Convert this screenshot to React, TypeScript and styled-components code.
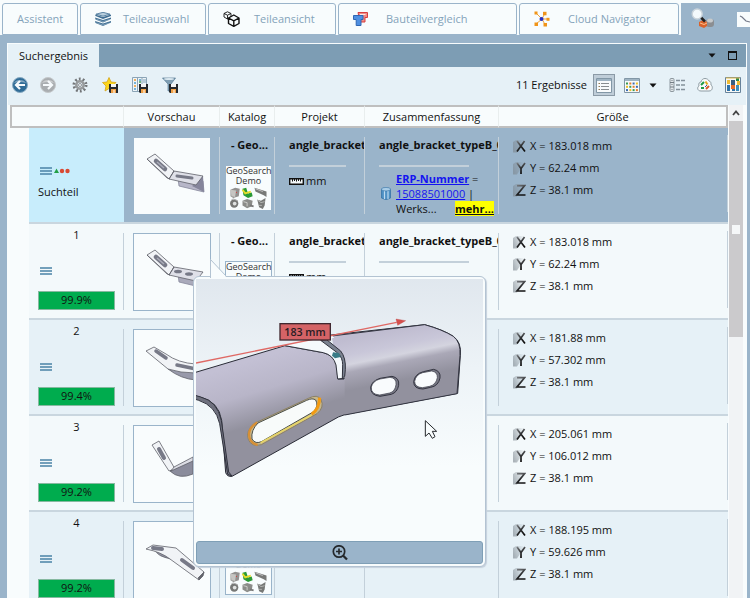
import React from "react";
import styled, { createGlobalStyle, css } from "styled-components";

const GlobalStyle = createGlobalStyle`
  * { box-sizing: border-box; }
  html, body { margin: 0; background: #9ab4ca; }
  body, button {
    font-family: "Open Sans", "Noto Sans", "Liberation Sans", sans-serif;
    font-size: 11px;
    line-height: 16px;
    color: #111;
  }
  button { margin: 0; padding: 0; border: 0; background: none; }
  svg { display: block; flex: none; }
`;

const Page = styled.div`
  height: 100vh;
  display: flex;
  flex-direction: column;
  overflow: hidden;
  background: #9ab4ca;
`;

const TabBar = styled.nav`
  flex: none;
  display: flex;
  gap: 2px;
  height: 35px;
  padding: 3px 0 0 2px;
  background: #f8fcfd;
  overflow: hidden;
`;

const Tab = styled.button<{ $width: number; $gap?: number }>`
  flex: none;
  display: flex;
  align-items: center;
  gap: ${(p) => p.$gap ?? 12}px;
  width: ${(p) => p.$width}px;
  padding-left: 14px;
  border: 1px solid #9ab4ca;
  border-radius: 3px 3px 0 0;
  background: #f8fcfd;
  color: #84a3ba;
`;

const ActiveTab = styled.button`
  flex: 1;
  display: flex;
  align-items: center;
  gap: 20px;
  padding-left: 10px;
  background: #9ab4ca;
`;

const PartBadge = styled.span`
  flex: 1;
  height: 15px;
  background: #f8fcfd;
`;

const Panel = styled.main`
  flex: 1;
  min-height: 0;
  display: flex;
  flex-direction: column;
  margin: 8px 3px 0 7px;
  border: 1px solid #f8fcfd;
  border-bottom: 0;
  background: #f8fcfd;
`;

const TitleBar = styled.header`
  flex: none;
  display: flex;
  align-items: center;
  height: 23px;
  padding-right: 9px;
  background: #7d9db4;
`;

const PanelTab = styled.button`
  align-self: stretch;
  width: 91px;
  margin-right: auto;
  background: #e6f1f7;
`;

const WindowControls = styled.div`
  display: flex;
  align-items: center;
  gap: 12px;
`;

const Toolbar = styled.div`
  flex: none;
  display: flex;
  align-items: center;
  gap: 12px;
  height: 38px;
  padding: 0 5px 2px 4px;
  background: #e6f1f7;
`;

const ToolGroup = styled.div<{ $gap: number; $end?: boolean }>`
  display: flex;
  align-items: center;
  gap: ${(p) => p.$gap}px;
  ${(p) => p.$end && css`margin-left: auto;`}
`;

const IconButton = styled.button<{ $pressed?: boolean }>`
  display: grid;
  place-items: center;
  min-height: 16px;
  ${(p) =>
    p.$pressed &&
    css`
      width: 22px;
      height: 22px;
      border: 1px solid #8b9aa6;
      background: #bfcdd8;
      margin-right: 3px;
    `}
`;

const Body = styled.div`
  flex: 1;
  min-height: 0;
  display: flex;
  padding-left: 2px;
  gap: 1px;
`;

const Viewport = styled.div`
  flex: 1;
  min-width: 0;
  overflow: hidden;
`;

const Scrollbar = styled.div`
  flex: none;
  width: 14px;
  margin-right: 3px;
  background: #f1f3f5;
`;

const ScrollUp = styled.button`
  display: grid;
  place-items: center;
  width: 14px;
  height: 16px;
`;

const ScrollThumb = styled.div`
  display: grid;
  place-items: center;
  height: 216px;
  background: #cbcacc;
`;

const ScrollGrip = styled.span`
  width: 8px;
  height: 9px;
  background: #f5f7f8;
`;

const Grid = styled.table`
  width: 100%;
  table-layout: fixed;
  border-collapse: separate;
  border-spacing: 0;
`;

const Col = styled.col<{ $width?: number }>`
  width: ${(p) => (p.$width ? `${p.$width}px` : "auto")};
`;

const HeadCell = styled.th`
  height: 23px;
  padding: 0;
  font-weight: 400;
  line-height: 18px;
  background: #f8fcfd;
  border: 0 solid #bfbfbf;
  border-width: 2px 0;
  border-right: 1px solid #e9eeee;
  &:first-child { border-left: 2px solid #bfbfbf; }
  &:last-child { border-right: 2px solid #bfbfbf; }
`;

type Tone = "selected" | "light" | "tinted";
const tones: Record<Tone, string> = {
  selected: "#9ab4ca",
  light: "#f3f9fb",
  tinted: "#e6f1f7",
};

const Gutter = styled.td`
  padding: 0;
  background: #f8fcfd;
`;

const DataCell = styled.td<{ $tone: Tone; $first?: boolean }>`
  position: relative;
  height: 96px;
  padding: 9px 0 0;
  vertical-align: top;
  border-bottom: 2px solid #c9d6df;
  background: ${(p) =>
    p.$first && p.$tone === "selected" ? "#c8edfc" : tones[p.$tone]};
`;

const CellBox = styled.div<{ $inset?: number; $plain?: boolean }>`
  height: 77px;
  padding-left: ${(p) => p.$inset ?? 0}px;
  border-right: 1px solid ${(p) => (p.$plain ? "transparent" : "#c3d0da")};
`;

const RankBox = styled(CellBox)`
  display: flex;
  flex-direction: column;
  padding: 0 8px 0 9px;
`;

const Rank = styled.span`
  line-height: 16px;
  margin-top: -6px;
  text-align: center;
`;

const Markers = styled.span<{ $top: number }>`
  display: flex;
  align-items: center;
  gap: 2px;
  margin: ${(p) => p.$top}px 0 0 2px;
`;

const Similarity = styled.span`
  margin-top: auto;
  height: 19px;
  line-height: 16px;
  text-align: center;
  border: 1px solid #86b9a0;
  background: #00ac4e;
`;

const QueryLabel = styled.span`
  margin-top: 9px;
`;

const Preview = styled.div`
  width: 78px;
  height: 78px;
  border: 1px solid #9ab4ca;
  background: #f9fcfd;
`;

const Title = styled.strong<{ $center?: boolean }>`
  display: block;
  height: 16px;
  overflow: hidden;
  white-space: nowrap;
  line-height: 15px;
  font-weight: 700;
  text-align: ${(p) => (p.$center ? "center" : "left")};
`;

const Logo = styled.div`
  width: 47px;
  height: 46px;
  margin-top: 12px;
  border: 1px solid #9ab4ca;
  background: #f8fcfd;
  font-size: 9px;
  line-height: 10px;
  text-align: center;
  color: #333;
`;

const Rule = styled.hr<{ $end: number }>`
  height: 2px;
  margin: 12px ${(p) => p.$end}px 0 0;
  border: 0;
  background: #c3d0da;
`;

const Unit = styled.div`
  display: flex;
  align-items: center;
  gap: 2px;
  margin-top: 6px;
`;

const Summary = styled.div`
  display: flex;
  align-items: center;
  gap: 5px;
  margin: 4px 4px 0 2px;
  line-height: 15px;
`;

const SummaryText = styled.div`
  flex: 1;
  white-space: nowrap;
`;

const Link = styled.a<{ $strong?: boolean }>`
  color: #1414f0;
  font-weight: ${(p) => (p.$strong ? 700 : 400)};
`;

const LastLine = styled.div`
  display: flex;
  justify-content: space-between;
`;

const MoreLink = styled.a`
  background: #ffff00;
  color: #111;
  font-weight: 700;
`;

const Dimensions = styled.div`
  display: grid;
  grid-auto-rows: 22px;
  margin-top: -2px;
`;

const Dimension = styled.div`
  display: flex;
  align-items: center;
  gap: 4px;
`;

const Popup = styled.aside`
  position: absolute;
  z-index: 2;
  left: 69px;
  top: 52px;
  width: 293px;
  padding: 2px;
  border: 1px solid #b3c3d2;
  border-radius: 6px;
  background: #f8fcfd;
  box-shadow: 1px 1px 1px #c5d0dc;
`;

const Scene = styled.svg`
  width: 100%;
  height: 261px;
`;

const Pointer = styled.svg`
  position: absolute;
  left: 16px;
  top: -18px;
`;

const ZoomButton = styled.button`
  display: grid;
  place-items: center;
  width: 100%;
  height: 23px;
  margin-top: 1px;
  border: 1px solid #7f9fb6;
  border-radius: 3px;
  background: #9ab4ca;
`;

const LayersIcon = () => (
  <svg width="16" height="14" viewBox="0 0 16 14" fill="#416f93">
    <path d="M0 9l8 2.500L16 9v1.500L8 14 .5 11z" />
    <path d="M0 5.500L8 8l8-2.500V7L8 10.500.5 7.500z" />
    <path d="M0 2.500L8 5l8-2.500V4L8 7 .5 4z" />
    <path d="M1 2.200L8 .300l7 1.900-7 2z" fill="#b9cfde" stroke="#416f93" strokeWidth=".8" />
    <path d="M1.500 7.300L8 9.500l6.500-2M1.500 10.800L8 13l6.500-2" fill="none" stroke="#9fbace" strokeWidth=".6" />
  </svg>
);

const CubesIcon = () => (
  <svg width="17" height="16" viewBox="0 0 17 16" fill="#f8fcfd" stroke="#111" strokeLinejoin="round">
    <path d="M1 2.500L4.500.800 8 2.500v3.500L4.500 8 1 6zM1 2.500l3.500 1.700L8 2.500M4.500 4.200V8" strokeWidth=".9" />
    <path d="M5.500 7L10.800 4 16 7v5.500L10.800 15.300 5.500 12.500zM5.500 7l5.300 2.800L16 7M10.800 9.800v5.500" strokeWidth="1.400" />
  </svg>
);

const CompareIcon = () => (
  <svg width="15" height="14" viewBox="0 0 15 14">
    <path d="M5 .500h9.500v5H12V10H7z" fill="#f08a84" stroke="#d63e40" />
    <path d="M7 2.500h5.500" stroke="#fff" strokeWidth=".8" />
    <path d="M.5 3.500h9.500v4H8v6H3.200v-6H.5z" fill="#4f8fe0" stroke="#2f66b3" />
  </svg>
);

const NodesIcon = () => (
  <svg width="16" height="16" viewBox="0 0 16 16">
    <path d="M2 2l6 6 3-6M8 8h6M8 8l3 5.500M8 8l-6 5" stroke="#f0a23a" strokeWidth="1" fill="none" />
    <g fill="#f09418">
      <rect x=".5" y=".5" width="3" height="3" /><rect x="9" y=".8" width="3.500" height="3.500" />
      <rect x="12.500" y="6.800" width="3" height="3" /><rect x="9.500" y="12" width="3.500" height="3.500" />
      <rect x=".5" y="11.500" width="3.500" height="3.500" />
    </g>
    <circle cx="7.500" cy="8" r="2" fill="#2531c5" />
  </svg>
);

const SearchPartIcon = () => (
  <svg width="26" height="22" viewBox="0 0 26 22">
    <rect x="15" y="11" width="8" height="8" rx="3" fill="#8b8e92" />
    <ellipse cx="19" cy="12.500" rx="3" ry="2" fill="#c7cacc" />
    <path d="M8 14l4-2 4 2v4l-3 2-5-2z" fill="#d9632c" />
    <path d="M9 15l4 1.500 3-1.500" stroke="#ffc08c" fill="none" />
    <path d="M9.500 9l4.500 4.500" stroke="#222" strokeWidth="2.500" />
    <circle cx="6.200" cy="6" r="5" fill="#f3f9fc" stroke="#c9d3db" strokeWidth="1.400" />
  </svg>
);

const Caret = () => (
  <svg width="8" height="5" viewBox="0 0 8 5"><path d="M.5.500h7L4 4.500z" fill="#111" /></svg>
);

const MaximizeIcon = () => (
  <svg width="9" height="9" viewBox="0 0 9 9"><path d="M0 0h9v9H0zM1 2v6h7V2z" fill="#111" fillRule="evenodd" /></svg>
);

const ArrowIcon = ({ forward }: { forward?: boolean }) => (
  <svg width="16" height="16" viewBox="0 0 16 16">
    <circle cx="8" cy="8" r="7.500" fill={forward ? "#a9adb0" : "#2f6c97"} stroke={forward ? "#c4c8ca" : "#88aac2"} />
    <path d="M2 6a6.500 5 0 0 1 12 0q-6-2-12 0z" fill="#fff" opacity=".4" />
    <path d={forward ? "M3 8h8M8 4l4 4-4 4" : "M13 8H5M8 4L4 8l4 4"} stroke="#f6fafc" strokeWidth="2.200" fill="none" />
  </svg>
);

const GearIcon = () => (
  <svg width="16" height="16" viewBox="0 0 16 16" fill="none">
    <circle cx="8" cy="8" r="6" stroke="#737679" strokeWidth="3" strokeDasharray="1.800 1.970" />
    <circle cx="8" cy="8" r="3.700" stroke="#989b9d" strokeWidth="2.500" />
    <circle cx="8" cy="8" r="1.500" fill="#f7fafb" stroke="#6c6f72" strokeWidth=".7" />
  </svg>
);

const Disk = () => (
  <g>
    <path d="M7 7h9v9H8l-1-1z" fill="#25282c" />
    <path d="M9 7h5v3H9z" fill="#f4f4f4" />
    <path d="M9 12h5v4H9z" fill="#f2a044" />
    <path d="M12 13v3" stroke="#fff" />
  </g>
);

const FavoriteSaveIcon = () => (
  <svg width="16" height="16" viewBox="0 0 16 16">
    <path d="M7 .500l2 4.500 5 .5-3.500 3.500 1 5L7 11.500 3 14l1-5L.500 5.500l4.500-.5z" fill="#fcd51c" stroke="#d7a514" strokeWidth=".8" />
    <Disk />
  </svg>
);

const TableSaveIcon = () => (
  <svg width="16" height="16" viewBox="0 0 16 16">
    <path d="M.5.500h14v14H.5z" fill="#edf4f8" stroke="#8ba4b6" />
    <path d="M5.500 1v13M10 1v13" stroke="#8ba4b6" />
    <path d="M2 3h2M2 9h2" stroke="#ed982c" strokeWidth="1.500" /><path d="M2 6h2M7 3h2M2 12h2" stroke="#4d9cc7" strokeWidth="1.500" />
    <path d="M7 5h2" stroke="#4ca456" strokeWidth="1.500" /><path d="M11 2h3v4h-3z" fill="#b6cad7" />
    <Disk />
  </svg>
);

const FilterSaveIcon = () => (
  <svg width="16" height="16" viewBox="0 0 16 16">
    <path d="M.5 1h13L9 7v6l-3 1V7z" fill="#7f9eb3" stroke="#567a94" strokeWidth=".7" />
    <ellipse cx="7" cy="2" rx="5" ry="1" fill="#d9e7ef" />
    <Disk />
  </svg>
);

const ListIcon = () => (
  <svg width="16" height="15" viewBox="0 0 16 15">
    <path d="M.5.500h15v14H.5z" fill="#f8fbfc" stroke="#8297a6" /><path d="M1 1h14v2H1z" fill="#9fb4c3" />
    <path d="M5 5.500h8M5 8.500h8M5 11.500h8" stroke="#888d90" />
    <path d="M2.500 5.500h1.500M2.500 8.500h1.500M2.500 11.500h1.500" stroke="#937b55" />
  </svg>
);

const tileColors = ["#3c9a50", "#e67d2d", "#3c6bb1", "#edbf26"];
const TilesIcon = () => (
  <svg width="16" height="15" viewBox="0 0 16 15">
    <path d="M.5.500h15v14H.5z" fill="#f8fbfc" stroke="#8297a6" /><path d="M1 1h14v2H1z" fill="#9fb4c3" />
    {[0, 1, 2].map((r) => [0, 1, 2, 3].map((c) => (
      <rect key={`${r}${c}`} x={2 + c * 3.300} y={4.500 + r * 3.300} width="2" height="2" fill={tileColors[(r * 3 + c) % 4]} />
    )))}
  </svg>
);

const DetailIcon = () => (
  <svg width="16" height="14" viewBox="0 0 16 14">
    <rect x="1" y=".5" width="4" height="13" rx="1" fill="#e0e6e9" stroke="#848e95" strokeWidth=".9" />
    <path d="M1 4.500h4M1 9h4M3 2v1M3 6v1M3 11v1" stroke="#737d84" />
    <path d="M7 2.500h4M12 2.500h4M7 7h4M12 7h4M7 11.500h4M12 11.500h4" stroke="#84919b" strokeWidth="1.500" />
  </svg>
);

const CloudIcon = () => (
  <svg width="16" height="14" viewBox="0 0 16 14">
    <path d="M4 13C0 13 0 9 2 8 1 5 3 4 4 4c1-5 7-4 8-1 2 .5 2 2 2 4 2 1 2 6-2 6z" fill="#f9fbfb" stroke="#8d9ba3" />
    <path d="M4 7l3-3M4 10h3" stroke="#1f9b46" strokeWidth="2" /><path d="M8.500 3.500l2 3" stroke="#e2aa1f" strokeWidth="2" />
    <path d="M9 11l3-3" stroke="#d75a2c" strokeWidth="2" /><path d="M8 9l2-2" stroke="#35549c" />
  </svg>
);

const MosaicIcon = () => (
  <svg width="16" height="16" viewBox="0 0 16 16">
    <path d="M.5.500h15v15H.5z" fill="#f7f8f5" stroke="#67829a" />
    <path d="M2 3h3v4H2zM12 4h3v4h-3z" fill="#efbb34" /><path d="M2 8h3v6H2zM7 12h3v2H7z" fill="#2f72aa" />
    <path d="M6 3h4v5H6z" fill="#355d82" /><path d="M6 8h4v4H6z" fill="#e46c29" />
    <path d="M11 1h3v3h-3z" fill="#298a50" /><path d="M11 8h3v6h-3z" fill="#3d8fbd" /><path d="M1 1h14" stroke="#e5bd4a" />
  </svg>
);

const BarsIcon = () => (
  <svg width="12" height="8" viewBox="0 0 12 8"><path d="M0 1h12M0 4h12M0 7h12" stroke="#4a83a6" strokeWidth="1.500" /></svg>
);

const StatusDots = () => (
  <svg width="16" height="6" viewBox="0 0 16 6">
    <path d="M0 5L2.500.500 5 5z" fill="#23a047" /><circle cx="8" cy="3" r="2.200" fill="#d94933" /><circle cx="13.500" cy="3" r="2.200" fill="#d94933" />
  </svg>
);

const RulerIcon = () => (
  <svg width="15" height="7" viewBox="0 0 15 7">
    <path d="M.7.700h13.600v5.600H.7z" fill="#f4f8fa" stroke="#111" strokeWidth="1.400" />
    <path d="M3.500 1v2.500M5.500 1v2M7.500 1v2.500M9.500 1v2M11.500 1v2.500" stroke="#111" />
  </svg>
);

const DatabaseIcon = () => (
  <svg width="10" height="13" viewBox="0 0 10 13">
    <path d="M.5 2v9q4.500 3 9 0V2z" fill="#4f91c4" stroke="#3674a7" strokeWidth=".8" />
    <path d="M3.500 4v8M7 4v8" stroke="#bddaf0" strokeWidth="1.200" />
    <ellipse cx="5" cy="2.200" rx="4.500" ry="1.800" fill="#a9cde7" stroke="#3674a7" strokeWidth=".6" />
  </svg>
);

const axisPaths: Record<string, string> = {
  X: "M4 2l8 10.500M11.500 2L4 12.500",
  Y: "M4 2l4 5.500L12 2M8 7.500v5.500",
  Z: "M4 2.700h7.500L4 12h8.500",
};

const AxisIcon = ({ axis }: { axis: string }) => (
  <svg width="13" height="14" viewBox="0 0 13 14">
    <defs>
      <linearGradient id={`shade${axis}`} x1="0" y1=".6" x2="1" y2=".2">
        <stop offset="0" stopColor="#7b858d" stopOpacity=".6" /><stop offset="1" stopColor="#7b858d" stopOpacity="0" />
      </linearGradient>
      <linearGradient id={`ink${axis}`} gradientUnits="userSpaceOnUse" x1="4" y1="1" x2="9" y2="12">
        <stop offset="0" stopColor="#84878b" /><stop offset=".6" stopColor="#2a2c2e" /><stop offset="1" stopColor="#111" />
      </linearGradient>
    </defs>
    <path d="M0 3l3-2h9L7 9l-3 4.500H0z" fill={`url(#shade${axis})`} />
    <path d={axisPaths[axis]} stroke={`url(#ink${axis})`} strokeWidth="1.700" fill="none" />
  </svg>
);

const PartsCollage = () => (
  <svg width="45" height="24" viewBox="0 0 45 26" preserveAspectRatio="xMidYMid meet">
    <path d="M3 4l5-2 5 1-1 8-6 2-3-2z" fill="#92918f" /><path d="M3 4l6 1-1 7-4-1z" fill="#c6c5c2" /><path d="M9 7h1" stroke="#d33" />
    <path d="M16 3l4-1 2 6 4-1 1 4-5 2-5-3z" fill="#2a9a37" /><path d="M16 4l3 4 6-2" stroke="#e4db2a" strokeWidth="2" fill="none" />
    <path d="M29 2l13 4v6l-3-2-9-4z" fill="#777977" /><path d="M30 3l8 3" stroke="#c5c6c5" />
    <circle cx="7" cy="19" r="4.500" fill="#777876" /><circle cx="7.500" cy="19" r="2" fill="#e0e2e1" /><path d="M4 15l2-1 5 2" stroke="#aaa" fill="none" />
    <path d="M16 16l5-2 6 2-1 6-5 2-5-3z" fill="#8b8c89" /><path d="M17 17l4 1v4" stroke="#d0d0cd" fill="none" /><path d="M24 21l4 1" stroke="#777" strokeWidth="2" />
    <path d="M32 15l4 1 5-3-1 8-2 4-4-2z" fill="#777977" /><path d="M32 15l4 3 4-1M34 21h3" stroke="#b7b8b6" fill="none" />
  </svg>
);

const PartDrawing = ({ shape }: { shape: number }) => (
  <svg width="76" height="76" viewBox="0 0 76 76" fill="#f1f3f6" stroke="#5f616a" strokeWidth=".8" strokeLinejoin="round">
    {shape <= 1 && (
      <g>
        <path d="M44 40l25 3 1 11-25-6z" fill={shape ? "#aaaabb" : "#b7b6c8"} stroke="#85869a" />
        {shape === 0 && <path d="M58 48l11-10 1 16z" fill="#85859b" stroke="none" />}
        <path d="M13 21l8-5 19 17-4 8-3-1z" />
        <path d="M40 33l29 5-7 9-27-6z" fill="#dfe0e8" />
        <path d="M22 23l9 8" stroke="#777987" strokeWidth="4.500" strokeLinecap="round" />
        <path d="M23 24l7 6" stroke="#aaacb8" strokeWidth="1.500" />
        {shape === 0 ? (
          <path d="M43 38l15 2" stroke="#777987" strokeWidth="3" strokeLinecap="round" />
        ) : (
          <g fill="#777987" stroke="none"><ellipse cx="44" cy="37.500" rx="4" ry="1.800" /><ellipse cx="55" cy="40" rx="4" ry="1.800" /></g>
        )}
        <path d="M13 21l22 20 5-8" fill="none" />
      </g>
    )}
    {shape === 2 && (
      <g>
        <path d="M34 39q14 3 28 4v7q-15-1-28-11z" fill="#9899aa" />
        <path d="M12 21l8-4 12 7q12 9 30 10v9q-16 0-28-4z" />
        <path d="M22 21l10 7M43 35l19 4" stroke="#777987" strokeWidth="3.500" strokeLinecap="round" />
      </g>
    )}
    {shape === 3 && (
      <g>
        <path d="M18 19l7-4 16 28-6 2z" />
        <path d="M25 23l5 9" stroke="#777987" strokeWidth="4" strokeLinecap="round" />
        <path d="M36 45l23-12v15q-14 6-23-3z" fill="#8b8c9c" />
        <path d="M40 41l19-10v4L37 45z" fill="#dcdde5" />
      </g>
    )}
    {shape === 4 && (
      <g>
        <path d="M22 27l20 5-5 5q-14-3-15-8z" fill="#9293a2" />
        <path d="M12 27l7-4 23 3 28 24-5 8-29-21q-9-7-24-10z" />
        <path d="M19 26l9 1M48 38l11 8" stroke="#777987" strokeWidth="4" strokeLinecap="round" />
        <path d="M64 56l6-6-1 4-4 4z" fill="#62646c" />
      </g>
    )}
  </svg>
);

const BracketScene = () => (
  <Scene viewBox="18 26 861 783" preserveAspectRatio="xMidYMid slice" role="img" aria-label="183 mm">
    <defs>
      <linearGradient id="backdrop" x1="0" y1="0" x2="0" y2="1">
        <stop offset="0" stopColor="#dfe6ed" /><stop offset=".35" stopColor="#edf3f7" /><stop offset=".7" stopColor="#f8fcfd" />
      </linearGradient>
      <linearGradient id="leftMetal" gradientUnits="userSpaceOnUse" x1="220" y1="260" x2="280" y2="460">
        <stop offset="0" stopColor="#c3c0d4" /><stop offset=".45" stopColor="#b8b5c8" /><stop offset=".9" stopColor="#92919e" />
      </linearGradient>
      <linearGradient id="rightMetal" gradientUnits="userSpaceOnUse" x1="600" y1="180" x2="630" y2="330">
        <stop offset="0" stopColor="#bfbcd0" /><stop offset=".32" stopColor="#c9c7d9" /><stop offset=".5" stopColor="#d4d4df" /><stop offset=".65" stopColor="#aaa8b7" /><stop offset="1" stopColor="#92919e" />
      </linearGradient>
    </defs>
    <rect x="0" y="0" width="900" height="840" fill="url(#backdrop)" />
    <path d="M0 311L285 226l115 21q30 7 38 37l6 42 18 0 6-58q-8-30-45-74l281-31q55 15 86 35 25 18 21 57l-8 114-336 63-22 8-319 178q-14 2-19-11L95 450q-9-56-62-69L0 374z" fill="url(#leftMetal)" stroke="#292b36" strokeWidth="3" strokeLinejoin="round" />
    <path d="M425 197l279-34q54 15 86 35 23 18 20 57l-9 115-337 64V290q-4-32-33-58z" fill="url(#rightMetal)" />
    <path d="M425 197l279-34q54 15 86 35 23 18 20 57l-9 115-337 64" fill="none" stroke="#333541" strokeWidth="3" />
    <path d="M0 370l32 10q50 12 62 70l22 155 10 12-13-5-24-152Q77 406 26 390L0 382z" fill="#6f707e" stroke="#30323d" strokeWidth="3" />
    <path d="M285 226L421 192l12 10-30 8 41 36 20 32-1 43-20 5-7-44q-8-28-36-35z" fill="#f5f9fc" />
    <path d="M285 226l115 21q30 7 38 37l5 42 20-2" fill="none" stroke="#31333e" strokeWidth="3" />
    <path d="M392 210l18-2 42 34q16 20 14 56l-2 20-7 5 1-40q0-21-15-35z" fill="#7b8290" stroke="#31333e" strokeWidth="3" />
    <path d="M429 246l18 2 5 12-17 4-9-8z" fill="#397b86" />
    <path d="M193 459L355 384q28-14 38 4 11 23-12 42L214 523q-30 8-39-16-9-24 18-48z" fill="#c6b78c" stroke="#8b8067" strokeWidth="3" />
    <path d="M203 524q-26-7-26-34 3-22 25-33" stroke="#d78f35" strokeWidth="7" fill="none" />
    <path d="M204 458L350 390q18-8 27-1 10 17-6 35L216 513q-20 10-30-7-4-26 18-48z" fill="#f8fbfa" stroke="#4b4f49" strokeWidth="3" />
    <path d="M365 432q23-16 24-50" stroke="#f39b11" strokeWidth="9" fill="none" />
    <path d="M212 517l153-83" stroke="#e8d667" strokeWidth="5" />
    <path d="M570 324l36-6q23 4 20 27-4 21-22 27l-34 6q-29-3-28-27 3-19 28-27z" fill="#777784" stroke="#343541" strokeWidth="3" />
    <path d="M570 326l30-5q20 2 18 22-3 21-19 25l-30 6q-27-2-25-24 4-18 26-24z" fill="#f9fbfd" stroke="#343541" strokeWidth="2" />
    <path d="M700 304l31-7q22 5 19 26-5 24-28 28l-23 5q-28 0-28-22 3-23 29-30z" fill="#777784" stroke="#343541" strokeWidth="3" />
    <path d="M698 307l27-5q18 3 17 20-4 21-23 26l-22 4q-23-1-23-19 3-20 24-26z" fill="#f9fbfd" stroke="#343541" strokeWidth="2" />
    <path d="M18 278L620 156" stroke="#df6965" strokeWidth="4" />
    <path d="M618 146l29 5-24 14z" fill="#d54f4c" stroke="#b84343" />
    <rect x="270" y="160" width="151" height="49" fill="#d46366" stroke="#40272f" strokeWidth="4" />
    <text x="345" y="196" textAnchor="middle" fontFamily="Open Sans, sans-serif" fontSize="32" fontWeight="600" fill="#281d24">183 mm</text>
    <path d="M706 451v47l11-10 10 16 8-5-8-16h13z" fill="#f8fcfd" stroke="#25282c" strokeWidth="3" strokeLinejoin="round" />
  </Scene>
);

const ZoomInIcon = () => (
  <svg width="16" height="16" viewBox="0 0 16 16" fill="none" stroke="#24282c" strokeWidth="1.700">
    <circle cx="7" cy="6.500" r="5.700" /><path d="M11 10.500l4 4" strokeWidth="2.300" /><path d="M4 6.500h6M7 3.500v6" />
  </svg>
);

type Row = {
  label: string;
  score?: string;
  summary?: string;
  erp?: string;
  x: string;
  y: string;
  z: string;
};

const rows: Row[] = [
  { label: "Suchteil", summary: "angle_bracket_typeB_01", erp: "15088501000", x: "183.018", y: "62.24", z: "38.1" },
  { label: "1", score: "99.9%", summary: "angle_bracket_typeB_01", x: "183.018", y: "62.24", z: "38.1" },
  { label: "2", score: "99.4%", x: "181.88", y: "57.302", z: "38.1" },
  { label: "3", score: "99.2%", x: "205.061", y: "106.012", z: "38.1" },
  { label: "4", score: "99.2%", x: "188.195", y: "59.626", z: "38.1" },
];

const PreviewPopup = () => (
  <Popup>
    <Pointer width="17" height="19" viewBox="0 0 17 19">
      <path d="M.5.500V19H17z" fill="#f8fcfd" /><path d="M.5 19V.500L16.500 17.500" fill="none" stroke="#b3c3d2" />
    </Pointer>
    <BracketScene />
    <ZoomButton aria-label="Vergrößern"><ZoomInIcon /></ZoomButton>
  </Popup>
);

const ResultRow = ({ row, index }: { row: Row; index: number }) => {
  const tone: Tone = index === 0 ? "selected" : index % 2 ? "light" : "tinted";
  return (
    <tr>
      <Gutter />
      <DataCell $tone={tone} $first>
        <RankBox $plain={index === 0}>
          {row.score && <Rank>{row.label}</Rank>}
          <Markers $top={row.score ? 24 : 30}>
            <BarsIcon />
            {!row.score && <StatusDots />}
          </Markers>
          {row.score ? <Similarity>{row.score}</Similarity> : <QueryLabel>{row.label}</QueryLabel>}
        </RankBox>
      </DataCell>
      <DataCell $tone={tone}>
        <CellBox $inset={9}><Preview><PartDrawing shape={index} /></Preview></CellBox>
        {index === 1 && <PreviewPopup />}
      </DataCell>
      <DataCell $tone={tone}>
        <CellBox $inset={5}>
          <Title $center>- Geo...</Title>
          <Logo>GeoSearch<br />Demo<PartsCollage /></Logo>
        </CellBox>
      </DataCell>
      <DataCell $tone={tone}>
        <CellBox $inset={14}>
          {row.summary && (
            <>
              <Title>angle_bracket</Title>
              <Rule $end={18} />
              <Unit><RulerIcon />mm</Unit>
            </>
          )}
        </CellBox>
      </DataCell>
      <DataCell $tone={tone}>
        <CellBox $inset={14}>
          {row.summary && (
            <>
              <Title>{row.summary}</Title>
              <Rule $end={29} />
            </>
          )}
          {row.erp && (
            <Summary>
              <DatabaseIcon />
              <SummaryText>
                <Link href="#erp" $strong>ERP-Nummer</Link> =<br />
                <Link href="#erp">{row.erp}</Link> |
                <LastLine><span>Werks...</span><MoreLink href="#mehr">mehr...</MoreLink></LastLine>
              </SummaryText>
            </Summary>
          )}
        </CellBox>
      </DataCell>
      <DataCell $tone={tone}>
        <CellBox $inset={14}>
          <Dimensions>
            {(["x", "y", "z"] as const).map((k) => (
              <Dimension key={k}><AxisIcon axis={k.toUpperCase()} />{k.toUpperCase()} = {row[k]} mm</Dimension>
            ))}
          </Dimensions>
        </CellBox>
      </DataCell>
    </tr>
  );
};

export default function App() {
  return (
    <Page>
      <GlobalStyle />
      <TabBar>
        <Tab $width={76}>Assistent</Tab>
        <Tab $width={126}><LayersIcon />Teileauswahl</Tab>
        <Tab $width={128} $gap={14}><CubesIcon />Teileansicht</Tab>
        <Tab $width={179} $gap={18}><CompareIcon />Bauteilvergleich</Tab>
        <Tab $width={160} $gap={18}><NodesIcon />Cloud Navigator</Tab>
        <ActiveTab aria-label="Suche">
          <SearchPartIcon />
          <PartBadge>
            <svg width="13" height="15" viewBox="0 0 13 15"><path d="M3 4l2 1 4 4 4 1" stroke="#747a8a" strokeWidth="1.200" fill="none" /></svg>
          </PartBadge>
        </ActiveTab>
      </TabBar>
      <Panel>
        <TitleBar>
          <PanelTab>Suchergebnis</PanelTab>
          <WindowControls>
            <IconButton aria-label="Menü"><Caret /></IconButton>
            <IconButton aria-label="Maximieren"><MaximizeIcon /></IconButton>
          </WindowControls>
        </TitleBar>
        <Toolbar>
          <ToolGroup $gap={16}>
            <ToolGroup $gap={12}>
              <IconButton aria-label="Zurück"><ArrowIcon /></IconButton>
              <IconButton aria-label="Vorwärts"><ArrowIcon forward /></IconButton>
            </ToolGroup>
            <ToolGroup $gap={14}>
              <IconButton aria-label="Einstellungen"><GearIcon /></IconButton>
              <IconButton aria-label="Favorit speichern"><FavoriteSaveIcon /></IconButton>
              <IconButton aria-label="Tabelle speichern"><TableSaveIcon /></IconButton>
              <IconButton aria-label="Filter speichern"><FilterSaveIcon /></IconButton>
            </ToolGroup>
          </ToolGroup>
          <ToolGroup $gap={6} $end>
            <span>11 Ergebnisse</span>
            <IconButton $pressed aria-label="Liste"><ListIcon /></IconButton>
            <ToolGroup $gap={9}>
              <IconButton aria-label="Kacheln"><TilesIcon /></IconButton>
              <IconButton aria-label="Ansicht wählen"><Caret /></IconButton>
            </ToolGroup>
          </ToolGroup>
          <ToolGroup $gap={12}>
            <IconButton aria-label="Details"><DetailIcon /></IconButton>
            <IconButton aria-label="Cloud"><CloudIcon /></IconButton>
            <IconButton aria-label="Spalten"><MosaicIcon /></IconButton>
          </ToolGroup>
        </Toolbar>
        <Body>
          <Viewport>
            <Grid>
              <colgroup>
                <Col $width={19} /><Col $width={95} /><Col $width={96} /><Col $width={55} />
                <Col $width={90} /><Col $width={134} /><Col />
              </colgroup>
              <thead>
                <tr>
                  <HeadCell colSpan={2} aria-label="Rang" />
                  <HeadCell>Vorschau</HeadCell>
                  <HeadCell>Katalog</HeadCell>
                  <HeadCell>Projekt</HeadCell>
                  <HeadCell>Zusammenfassung</HeadCell>
                  <HeadCell>Größe</HeadCell>
                </tr>
              </thead>
              <tbody>
                {rows.map((row, i) => <ResultRow key={row.label} row={row} index={i} />)}
              </tbody>
            </Grid>
          </Viewport>
          <Scrollbar>
            <ScrollUp aria-label="Nach oben">
              <svg width="8" height="6" viewBox="0 0 8 6"><path d="M1 5l3-3.500L7 5" stroke="#444" strokeWidth="1.800" fill="none" /></svg>
            </ScrollUp>
            <ScrollThumb><ScrollGrip /></ScrollThumb>
          </Scrollbar>
        </Body>
      </Panel>
    </Page>
  );
}
